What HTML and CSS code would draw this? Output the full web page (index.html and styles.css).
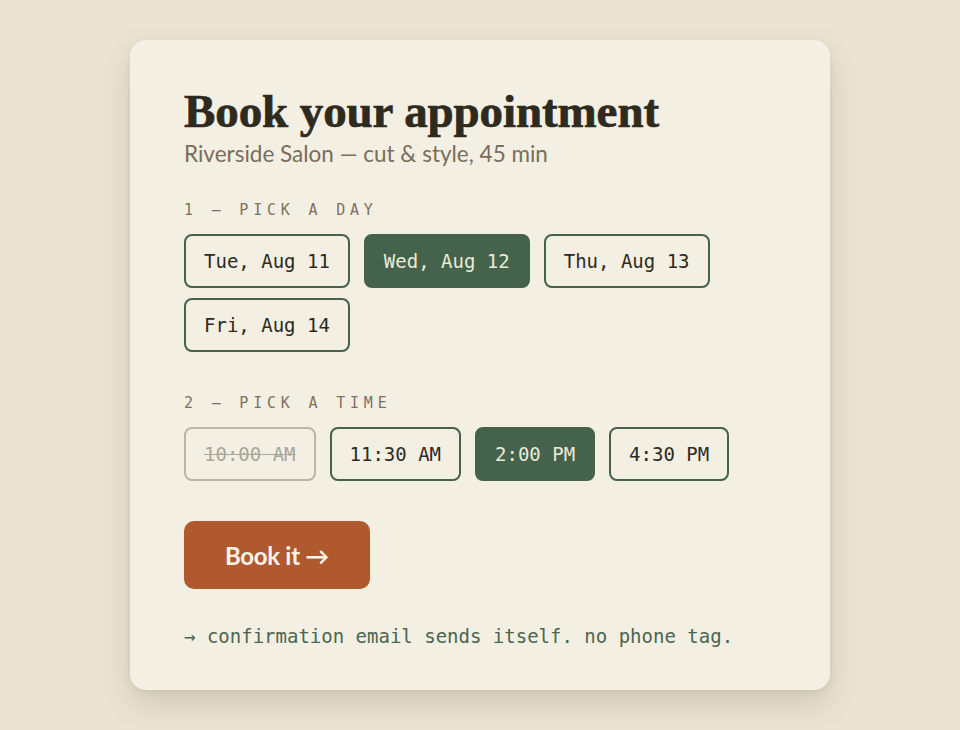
FILE: index.html
```html
<!DOCTYPE html>
<html lang="en">
<head>
<meta charset="utf-8">
<title>Book your appointment</title>
<link rel="stylesheet" href="styles.css">
</head>
<body>
<main class="card">
  <h1 class="title">Book your appointment</h1>
  <p class="subtitle">Riverside Salon — cut &amp; style, 45 min</p>

  <section class="step">
    <h2 class="step-label">1 — Pick a day</h2>
    <div class="options">
      <button class="opt">Tue, Aug 11</button>
      <button class="opt opt-selected">Wed, Aug 12</button>
      <button class="opt">Thu, Aug 13</button>
      <button class="opt">Fri, Aug 14</button>
    </div>
  </section>

  <section class="step">
    <h2 class="step-label">2 — Pick a time</h2>
    <div class="options">
      <button class="opt opt-disabled" disabled>10:00 AM</button>
      <button class="opt">11:30 AM</button>
      <button class="opt opt-selected">2:00 PM</button>
      <button class="opt">4:30 PM</button>
    </div>
  </section>

  <button class="book">Book it →</button>

  <p class="note">→ confirmation email sends itself. no phone tag.</p>
</main>
</body>
</html>
```

FILE: styles.css
```css
* { box-sizing: border-box; }

html, body {
  margin: 0;
  padding: 0;
}

body {
  background: #ebe4d3;
  min-height: 730px;
  padding-top: 40px;
  font-family: Lato, "Noto Sans", sans-serif;
}

.card {
  width: 700px;
  height: 650px;
  margin: 0 auto;
  background: #f3efe3;
  border-radius: 16px;
  box-shadow: 0 14px 30px rgba(90, 80, 50, 0.18), 0 2px 6px rgba(90, 80, 50, 0.08);
  padding: 45px 54px 0;
}

.title {
  margin: 0;
  font-family: "Liberation Serif", "DejaVu Serif", serif;
  font-weight: 700;
  font-size: 47px;
  line-height: 1.13;
  color: #2f2a1e;
  letter-spacing: -0.1px;
  -webkit-text-stroke: 0.7px #2f2a1e;
}

.subtitle {
  margin: 1px 0 0;
  font-size: 22.5px;
  line-height: 1.3;
  color: #7a6d5b;
}

.step {
  margin-top: 32px;
}

.step + .step {
  margin-top: 41px;
}

.step-label {
  margin: 0 0 14px;
  font-family: "DejaVu Sans Mono", "Liberation Mono", monospace;
  font-weight: 400;
  font-size: 15px;
  line-height: 20px;
  letter-spacing: 4.8px;
  text-transform: uppercase;
  color: #7c7262;
}

.options {
  display: flex;
  flex-wrap: wrap;
  gap: 10px 14px;
}

.opt {
  height: 54px;
  padding: 0 18px;
  border: 2px solid #44624c;
  border-radius: 8px;
  background: transparent;
  font-family: "DejaVu Sans Mono", "Liberation Mono", monospace;
  font-size: 19px;
  color: #2f2a1e;
  cursor: pointer;
}

.opt-selected {
  background: #44624c;
  color: #e9ead8;
}

.opt-disabled {
  border-color: #b9b6a5;
  color: #aaa698;
  text-decoration: line-through;
  cursor: default;
}

.book {
  display: block;
  margin-top: 40px;
  width: 186px;
  height: 68px;
  border: 0;
  border-radius: 10px;
  background: #b0582e;
  color: #fbf4ea;
  font-family: Lato, "Noto Sans", sans-serif;
  font-weight: 700;
  font-size: 24px;
  letter-spacing: -0.3px;
  cursor: pointer;
}

.note {
  margin: 35px 0 0;
  font-family: "DejaVu Sans Mono", "Liberation Mono", monospace;
  font-size: 19px;
  line-height: 24px;
  color: #4a6650;
}
```
